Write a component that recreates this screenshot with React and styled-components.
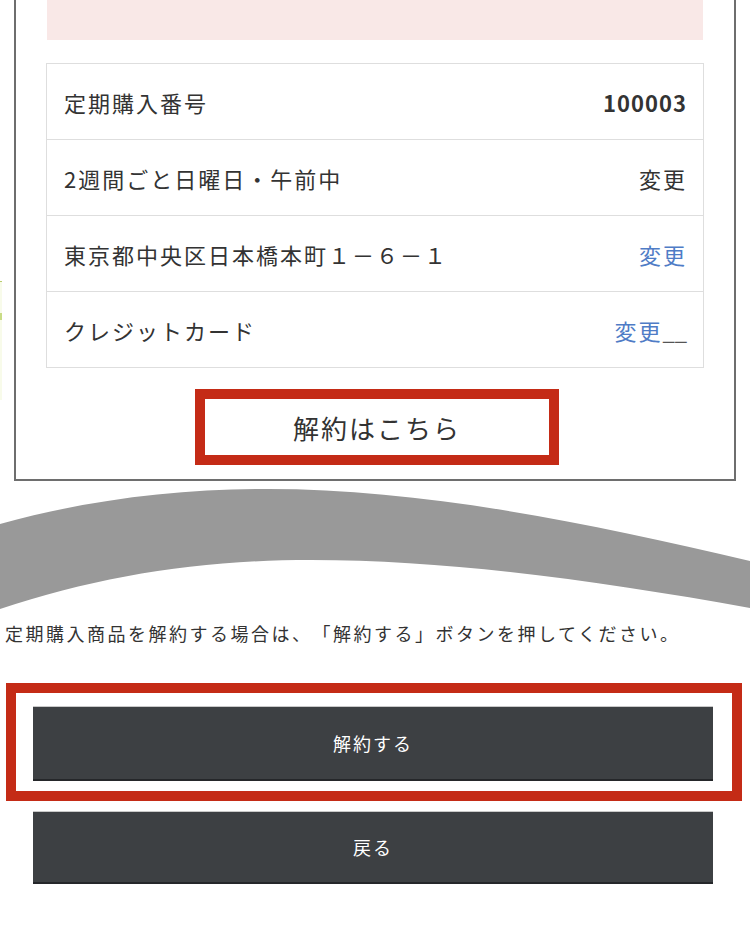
import React from 'react';
import styled, { createGlobalStyle } from 'styled-components';

const GlobalStyle = createGlobalStyle`
  body {
    margin: 0;
    background: #fff;
    font-family: "Noto Sans CJK JP", "Noto Sans", sans-serif;
    color: #333;
    text-spacing-trim: space-all;
  }
`;

const Page = styled.div`
  position: relative;
  width: 750px;
  height: 936px;
  overflow: hidden;
`;

const SideTab = styled.div`
  position: absolute;
  left: 0;
  top: 281px;
  width: 2px;
  height: 118px;
  background: #f8fbea;
  border-top: 1px solid #b9cc6e;

  &::after {
    content: '';
    position: absolute;
    left: 0;
    top: 31px;
    width: 2px;
    height: 7px;
    background: #c9dc86;
  }
`;

const Card = styled.div`
  margin: 0 14px;
  border: 2px solid #6e6e6e;
  border-top: none;
  padding: 0 31px 14px;
`;

const Notice = styled.div`
  height: 40px;
  background: #f9e8e7;
`;

const Table = styled.div`
  margin: 23px -1px 0;
  border: 1px solid #dedede;
`;

const Row = styled.div`
  display: flex;
  justify-content: space-between;
  align-items: center;
  height: 75px;
  padding: 0 17px;
  font-size: 22px;
  letter-spacing: 2px;
  border-top: ${(p) => (p.first ? 'none' : '1px solid #dedede')};
`;

const Value = styled.span`
  color: ${(p) => (p.link ? '#4f7cc6' : '#333')};
  font-weight: ${(p) => (p.bold ? 700 : 400)};
  letter-spacing: ${(p) => (p.bold ? '1px' : '2px')};
  margin-right: -1px;
`;

const Under = styled.span`
  color: #555;
  letter-spacing: 0;
`;

const OutlineButton = styled.div`
  width: 344px;
  height: 56px;
  margin: 21px 0 0 148px;
  border: 10px solid #c42b16;
  display: flex;
  align-items: center;
  justify-content: center;
  font-size: 26px;
  letter-spacing: 2px;
  color: #333;
`;

const Wave = styled.svg`
  display: block;
  width: 750px;
  height: 135px;
`;

const Message = styled.p`
  margin: 0;
  padding: 0 5px;
  font-size: 18px;
  line-height: 34px;
  letter-spacing: 2.5px;
  color: #333;
  white-space: nowrap;
`;

const Highlight = styled.div`
  margin: 33px 8px 0 6px;
  border: 10px solid #c42b16;
  padding: 13px 19px 10px 17px;
`;

const DarkButton = styled.div`
  box-sizing: border-box;
  width: 680px;
  height: ${(p) => p.h}px;
  margin-left: ${(p) => p.ml || 0}px;
  margin-top: ${(p) => p.mt || 0}px;
  background: #3d4043;
  border-top: 1px solid #c9c9c9;
  border-bottom: 2px solid #25272a;
  color: #fff;
  font-size: 18px;
  letter-spacing: 2px;
  display: flex;
  align-items: center;
  justify-content: center;
`;

const rows = [
  { label: '定期購入番号', value: '100003', bold: true },
  { label: '2週間ごと日曜日・午前中', value: '変更' },
  { label: '東京都中央区日本橋本町１－６－１', value: '変更', link: true },
  { label: 'クレジットカード', value: '変更', link: true, under: true },
];

export default function App() {
  return (
    <Page lang="ja">
      <GlobalStyle />
      <SideTab />
      <Card>
        <Notice />
        <Table>
          {rows.map((r, i) => (
            <Row key={r.label} first={i === 0}>
              <span>{r.label}</span>
              <Value link={r.link} bold={r.bold}>
                {r.value}
                {r.under && <Under>__</Under>}
              </Value>
            </Row>
          ))}
        </Table>
        <OutlineButton>解約はこちら</OutlineButton>
      </Card>
      <Wave viewBox="0 0 750 135">
        <path
          d="M0,43 C90,18 180,8 268,8 C420,8 580,40 750,80 L750,127 C600,100 450,79 311,79 C200,79 100,95 0,128 Z"
          fill="#999999"
        />
      </Wave>
      <Message>定期購入商品を解約する場合は、「解約する」ボタンを押してください。</Message>
      <Highlight>
        <DarkButton h={75}>解約する</DarkButton>
      </Highlight>
      <DarkButton h={73} ml={33} mt={10}>戻る</DarkButton>
    </Page>
  );
}
